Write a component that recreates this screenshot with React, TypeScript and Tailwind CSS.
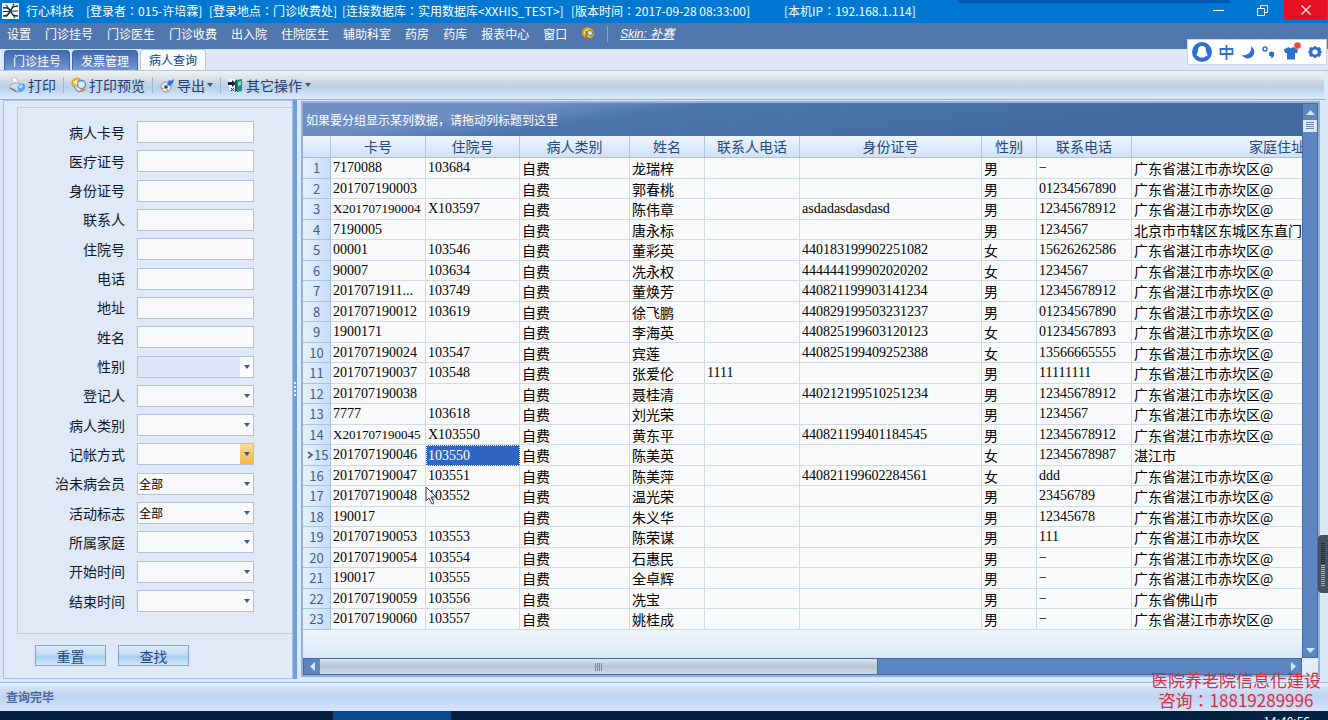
import React from 'react';

type Field = { id: string; label: string; kind: 'text' | 'select'; value?: string; tone?: 'muted' | 'hot' };

const fields: Field[] = [
  { id: 'card', label: '病人卡号', kind: 'text' },
  { id: 'medical', label: '医疗证号', kind: 'text' },
  { id: 'identity', label: '身份证号', kind: 'text' },
  { id: 'contact', label: '联系人', kind: 'text' },
  { id: 'inpatient', label: '住院号', kind: 'text' },
  { id: 'phone', label: '电话', kind: 'text' },
  { id: 'address', label: '地址', kind: 'text' },
  { id: 'name', label: '姓名', kind: 'text' },
  { id: 'sex', label: '性别', kind: 'select', tone: 'muted' },
  { id: 'registrar', label: '登记人', kind: 'select' },
  { id: 'category', label: '病人类别', kind: 'select' },
  { id: 'billing', label: '记帐方式', kind: 'select', tone: 'hot' },
  { id: 'member', label: '治未病会员', kind: 'select', value: '全部' },
  { id: 'active', label: '活动标志', kind: 'select', value: '全部' },
  { id: 'family', label: '所属家庭', kind: 'select' },
  { id: 'start', label: '开始时间', kind: 'select' },
  { id: 'end', label: '结束时间', kind: 'select' },
];

const menus = ['设置', '门诊挂号', '门诊医生', '门诊收费', '出入院', '住院医生', '辅助科室', '药房', '药库', '报表中心', '窗口'];

const GD = '广东省湛江市赤坎区@';

// card, inpatient no., name, contact phone, identity no., sex, phone, address
const patients: string[][] = [
  ['7170088', '103684', '龙瑞梓', '', '', '男', '−', GD],
  ['201707190003', '', '郭春桃', '', '', '男', '01234567890', GD],
  ['X201707190004', 'X103597', '陈伟章', '', 'asdadasdasdasd', '男', '12345678912', GD],
  ['7190005', '', '唐永标', '', '', '男', '1234567', '北京市市辖区东城区东直门街道'],
  ['00001', '103546', '董彩英', '', '440183199902251082', '女', '15626262586', GD],
  ['90007', '103634', '冼永权', '', '444444199902020202', '女', '1234567', GD],
  ['2017071911...', '103749', '董焕芳', '', '440821199903141234', '男', '12345678912', GD],
  ['201707190012', '103619', '徐飞鹏', '', '440829199503231237', '男', '01234567890', GD],
  ['1900171', '', '李海英', '', '440825199603120123', '女', '01234567893', GD],
  ['201707190024', '103547', '宾莲', '', '440825199409252388', '女', '13566665555', GD],
  ['201707190037', '103548', '张爱伦', '1111', '', '男', '11111111', GD],
  ['201707190038', '', '聂桂清', '', '440212199510251234', '男', '12345678912', GD],
  ['7777', '103618', '刘光荣', '', '', '男', '1234567', GD],
  ['X201707190045', 'X103550', '黄东平', '', '440821199401184545', '男', '12345678912', GD],
  ['201707190046', '103550', '陈美英', '', '', '女', '12345678987', '湛江市'],
  ['201707190047', '103551', '陈美萍', '', '440821199602284561', '女', 'ddd', GD],
  ['201707190048', '103552', '温光荣', '', '', '男', '23456789', GD],
  ['190017', '', '朱义华', '', '', '男', '12345678', GD],
  ['201707190053', '103553', '陈荣谋', '', '', '男', '111', '广东省湛江市赤坎区'],
  ['201707190054', '103554', '石惠民', '', '', '男', '−', GD],
  ['190017', '103555', '全卓辉', '', '', '男', '−', GD],
  ['201707190059', '103556', '冼宝', '', '', '男', '−', '广东省佛山市'],
  ['201707190060', '103557', '姚桂成', '', '', '男', '−', GD],
];

const CURRENT_ROW = 14;
const POINTER_ROW = 16;

const headers = ['', '卡号', '住院号', '病人类别', '姓名', '联系人电话', '身份证号', '性别', '联系电话', '家庭住址'];

const Caret = () => (
  <svg width="6" height="4" viewBox="0 0 6 4" className="shrink-0"><path d="M0 0h6L3 4z" fill="#3c5a8c" /></svg>
);

const PrinterIcon = () => (
  <svg width="17" height="16" viewBox="0 0 17 16">
    <path d="M2.500 1l4-.5 3 5.500-5 2z" fill="#fdfdfd" stroke="#aab4c2" strokeWidth=".7" />
    <path d="M1 8l5-2.500 6 1.500 3 3-3 4.500-5 .5-6-4z" fill="#d5dae2" stroke="#8b97a8" strokeWidth=".8" />
    <path d="M1.500 10.500l6 3v1.500l-6-3z" fill="#6b7a90" />
    <path d="M9 9c2-1 4-3 6-2 2 2 1 6-2 7.500-3 1-5-1-4-5.500z" fill="#4da3e6" />
    <path d="M10 9.500c1-1 3-2 4-1 0 2-2 3-4 3z" fill="#b7defa" />
  </svg>
);

const PreviewIcon = () => (
  <svg width="16" height="16" viewBox="0 0 16 16">
    <path d="M1 4l4-3 4 1 1 5-5 4-4-3z" fill="#f1b63a" stroke="#c4841c" strokeWidth=".7" />
    <path d="M2 5l3-2 2 2-1 3z" fill="#fdf2c4" />
    <path d="M3 9l3 5 3 1 2-3" fill="#dde7f2" stroke="#64779a" />
    <circle cx="10.500" cy="7.500" r="4" fill="#d9effd" stroke="#5e91c6" strokeWidth="1.300" />
    <path d="M8 14l5-3 2 2-4 2z" fill="#d8942a" />
  </svg>
);

const ExportIcon = () => (
  <svg width="15" height="15" viewBox="0 0 15 15">
    <circle cx="6" cy="9" r="5" fill="#e9edf2" stroke="#8793a6" strokeWidth="1" />
    <circle cx="6" cy="9" r="1.800" fill="#3a4252" />
    <path d="M2 11l2-1M8 13l-1-2" stroke="#d59b43" strokeWidth="1.200" />
    <path d="M7 7l2-5 2 1 3-2-1 4-3 3z" fill="#2a6ede" />
  </svg>
);

const DoorIcon = () => (
  <svg width="15" height="15" viewBox="0 0 15 15">
    <path d="M1 1h7v10H1z" fill="#f6f9fb" />
    <path d="M0 4h4V2l4 3.500L4 9V7H0z" fill="#14243a" />
    <path d="M7 3l2-2v12l-2 1z" fill="#0f5f5a" />
    <path d="M9 2l5-1v12l-5 1z" fill="#17907f" />
    <path d="M10 4l3-1v4l-3 1z" fill="#7fe0d2" />
    <path d="M3 10l3 3M3 13l3-3" stroke="#333" strokeWidth="1" />
  </svg>
);

const Grip = () => (
  <svg width="8" height="8" viewBox="0 0 8 8"><path d="M.5 0v8M2.500 0v8M4.500 0v8M6.500 0v8" stroke="#6e88b4" /></svg>
);

const Separator = () => <span className="h-4 w-px bg-[#9fb4cf]" />;

const TitleBar = () => (
  <header className="relative flex h-[23px] shrink-0 items-center bg-[#0078d2] pb-px font-['Noto_Sans_CJK_TC',sans-serif] text-xs whitespace-nowrap text-white">
    <div className="absolute top-0 right-[98px] h-[3px] w-[272px] bg-[#0459ae]" />
    <svg width="17" height="16" viewBox="0 0 17 16" className="mr-px ml-[2px] shrink-0">
      <path d="M0 0h17v16H0z" fill="#f4f8fb" />
      <path d="M1 5c4-1 6 0 7 3-1 3-3 5-7 5M16 3c-4 0-7 2-7 5s3 5 7 5" fill="none" stroke="#17304c" strokeWidth="1.400" />
      <path d="M1 8.500h6M10 8h6M4 2l4 5M12 1L9 7M4 14l4-5M13 15l-4-6" fill="none" stroke="#17304c" strokeWidth="1.200" />
    </svg>
    <h1 className="ml-[6px] w-[60px]">行心科技</h1>
    <span className="w-[123px]">[登录者：015-许培霖]</span>
    <span className="w-[133px]">[登录地点：门诊收费处]</span>
    <span className="w-[229px]">[连接数据库：实用数据库&lt;XXHIS_TEST&gt;]</span>
    <span className="w-[213px]">[版本时间：2017-09-28 08:33:00]</span>
    <span>[本机IP：192.168.1.114]</span>
    <div className="ml-auto flex self-start">
      <button aria-label="最小化" className="flex h-5 w-11 items-center justify-center">
        <svg width="11" height="11" viewBox="0 0 11 11"><path d="M0 5.500h11" stroke="#fff" /></svg>
      </button>
      <button aria-label="还原" className="flex h-5 w-11 items-center justify-center">
        <svg width="11" height="11" viewBox="0 0 11 11"><path d="M.5 3.500h7v7h-7zM3.500 3V.5h7v7H8" fill="none" stroke="#fff" /></svg>
      </button>
      <button aria-label="关闭" className="mr-px flex h-5 w-[43px] items-center justify-center bg-[#e81123]">
        <svg width="10" height="10" viewBox="0 0 10 10"><path d="M.5.5l9 9M9.500.5l-9 9" stroke="#fff" strokeWidth="1.100" /></svg>
      </button>
    </div>
  </header>
);

const MenuBar = () => (
  <nav className="flex h-[26px] shrink-0 items-center gap-[14px] bg-[#4f76ad] pb-1 pl-[7px] text-xs whitespace-nowrap text-white">
    {menus.map((item) => <button key={item}>{item}</button>)}
    <div className="flex items-center gap-3">
      <button aria-label="帮助">
        <svg width="14" height="16" viewBox="0 0 14 16">
          <path d="M5 11C1 9 1 4 5 2.500c3-1 7 1 7 4.500 0 2-1 4-3 4.500" fill="#f3dc9a" stroke="#e0a52c" strokeWidth="2" />
          <path d="M5.500 5v9.500" stroke="#a8741a" strokeWidth="2.200" />
          <circle cx="9" cy="7" r="2.600" fill="#d9e4c9" stroke="#4f8a6d" />
        </svg>
      </button>
      <span className="h-4 w-px bg-[#86a3cd]" />
      <a href="#skin" className="font-['Liberation_Sans','Noto_Sans_CJK_SC',sans-serif] italic underline">Skin: 补赛</a>
    </div>
  </nav>
);

const TabStrip = () => (
  <div role="tablist" className="flex h-[22px] shrink-0 items-end gap-[2px] border-b border-[#b9c6de] bg-[#dfe8f8] pl-1 text-xs">
    <button role="tab" className="h-5 w-[66px] rounded-t-sm border border-b-0 border-[#3f66a8] bg-linear-to-b from-[#3f68b2] to-[#7397d3] text-white">门诊挂号</button>
    <button role="tab" className="h-5 w-[66px] rounded-t-sm border border-b-0 border-[#3f66a8] bg-linear-to-b from-[#3f68b2] to-[#7397d3] text-white">发票管理</button>
    <button role="tab" aria-selected="true" className="h-[21px] w-[66px] rounded-t-sm border border-b-0 border-[#b4c8e6] bg-[#f7fbff] text-[#223f78]">病人查询</button>
  </div>
);

const Toolbar = () => (
  <div className="flex h-[29px] shrink-0 items-center gap-[7px] border-r-4 border-b border-r-[#dfe9f8] border-b-[#8fb0d8] bg-[linear-gradient(#f1f3f0_0%,#dfe4e8_25%,#cbd6e2_40%,#b7d0e8_60%,#cfe1f8_85%,#dbe9fb_100%)] pl-[9px] text-sm text-[#1f3c74]">
    <button className="flex items-center gap-[2px]"><PrinterIcon />打印</button>
    <Separator />
    <button className="flex items-center gap-[2px]"><PreviewIcon />打印预览</button>
    <Separator />
    <button className="flex items-center gap-[2px]"><ExportIcon />导出<Caret /></button>
    <Separator />
    <button className="flex items-center gap-[3px]"><DoorIcon />其它操作<Caret /></button>
  </div>
);

const FieldRow: React.FC<{ field: Field }> = ({ field }) => (
  <div className="flex items-center gap-3">
    <label htmlFor={field.id} className="w-[107px] pb-px text-right text-sm leading-5 text-[#101828]">{field.label}</label>
    {field.kind === 'text' ? (
      <input id={field.id} type="text" className="h-[22px] w-[117px] border border-[#b6c1d4] bg-[#f9fafb] px-px text-xs" />
    ) : (
      <div className={`flex h-[22px] w-[117px] border border-[#b6c1d4] ${field.tone === 'muted' ? 'bg-[#dde7f8]' : 'bg-[#f9fafb]'}`}>
        <select id={field.id} className="min-w-0 flex-1 appearance-none bg-transparent px-px text-xs text-black">
          <option>{field.value ?? ''}</option>
        </select>
        <span className={`flex w-[13px] items-center justify-center ${field.tone === 'hot' ? 'bg-linear-to-b from-[#f9dc92] to-[#eeb93e]' : 'bg-[#f9fafb]'}`}>
          <Caret />
        </span>
      </div>
    )}
  </div>
);

const SearchPanel = () => (
  <aside className="flex w-[290px] shrink-0 flex-col border border-[#a9c3e6] bg-[#e0e9f8]">
    <div className="mt-[6px] ml-[13px] flex flex-1 flex-col justify-between border border-r-0 border-[#bccde6] pt-[13px] pb-[21px]">
      {fields.map((field) => <FieldRow key={field.id} field={field} />)}
    </div>
    <div className="flex gap-3 pt-[11px] pb-3 pl-[31px]">
      {['重置', '查找'].map((text) => (
        <button key={text} className="h-[21px] w-[71px] border border-[#7fa3d3] bg-[linear-gradient(#dcecfb_0%,#c3dcf5_45%,#a9cdf0_55%,#cfeafc_100%)] text-sm leading-4 text-[#27467e]">{text}</button>
      ))}
    </div>
  </aside>
);

const cell = 'overflow-hidden border-r border-b border-[#d3dae4] p-0 pl-[2px] align-middle whitespace-nowrap';
const digits = "font-['Liberation_Serif','Noto_Sans_CJK_SC',serif] text-sm/4";
const longDigits = "font-['Liberation_Serif','Noto_Sans_CJK_SC',serif] text-[13px]/4";
const hanzi = "font-['Noto_Sans_CJK_SC',sans-serif] text-sm/4";

const PatientTable = () => (
  <table className="w-[1120px] table-fixed border-separate border-spacing-0 text-black">
    <colgroup>
      <col className="w-[28px]" />
      <col className="w-[95px]" />
      <col className="w-[94px]" />
      <col className="w-[110px]" />
      <col className="w-[75px]" />
      <col className="w-[95px]" />
      <col className="w-[182px]" />
      <col className="w-[55px]" />
      <col className="w-[95px]" />
      <col className="w-[291px]" />
    </colgroup>
    <thead>
      <tr className="h-[22px]">
        {headers.map((text) => (
          <th key={text} className="border-r border-b border-r-[#b3c5de] border-b-[#a9c0de] bg-linear-to-b from-[#eef6fd] to-[#cfe2f8] p-0 pb-[2px] text-sm/4 font-normal text-[#27467e]">{text}</th>
        ))}
      </tr>
    </thead>
    <tbody>
      {patients.map(([card, inpatient, name, contact, identity, sex, phone, address], i) => (
        <tr key={i} className="bg-[#f9fafb] odd:h-[21px] even:h-5">
          <th className="overflow-hidden border-r border-b border-[#a9c3e4] bg-linear-to-r from-[#e6f2fd] to-[#c8def7] p-0 text-[13px]/4 font-normal text-[#3f5c90]">
            {i === CURRENT_ROW ? (
              <span className="flex items-center pl-1">
                <svg width="7" height="8" viewBox="0 0 7 8"><path d="M1 1l4 3-4 3" fill="none" stroke="#4a648f" strokeWidth="1.800" /></svg>
                <span>15</span>
              </span>
            ) : i + 1}
          </th>
          <td className={`${cell} ${card.startsWith('X') ? longDigits : digits}`}>{card}</td>
          {i === CURRENT_ROW ? (
            <td className={`border border-dotted border-white bg-[#2f66c4] p-0 pl-px align-middle text-white ${digits}`}>{inpatient}</td>
          ) : i === POINTER_ROW ? (
            <td className={`relative border-r border-b border-[#d3dae4] p-0 pl-[2px] align-middle ${digits}`}>
              {inpatient}
              <svg width="12" height="19" viewBox="0 0 12 19" className="absolute top-0 -left-px">
                <path d="M1 1v14l3-3 3 6 2-1-3-6h5z" fill="#fff" stroke="#444" />
              </svg>
            </td>
          ) : (
            <td className={`${cell} ${digits}`}>{inpatient}</td>
          )}
          <td className={`${cell} ${hanzi}`}>自费</td>
          <td className={`${cell} ${hanzi}`}>{name}</td>
          <td className={`${cell} ${digits}`}>{contact}</td>
          <td className={`${cell} ${digits}`}>{identity}</td>
          <td className={`${cell} ${hanzi}`}>{sex}</td>
          <td className={`${cell} ${digits}`}>{phone}</td>
          <td className={`${cell} ${hanzi}`}>{address}</td>
        </tr>
      ))}
    </tbody>
  </table>
);

const PatientGrid = () => (
  <section className="mt-px mr-2 mb-[2px] ml-1 flex min-w-0 flex-1 border-2 border-[#8fb2de] bg-[#e3ecf9]">
    <div className="flex min-w-0 flex-1 flex-col">
      <div className="flex h-[33px] shrink-0 items-center bg-[linear-gradient(172deg,#7391c6_0%,#6b8bc1_22%,#4b73ac_34%,#41699f_100%)] pl-[3px] text-xs text-white">如果要分组显示某列数据，请拖动列标题到这里</div>
      <div className="flex-1 overflow-hidden bg-[linear-gradient(#f1f7fd_0%,#f1f7fd_94%,#d9e7f7_100%)]">
        <PatientTable />
      </div>
      <div className="flex h-[17px] shrink-0 border border-[#446a9f] bg-[#5c86bf]">
        <button aria-label="向左滚动" className="flex w-4 items-center justify-center">
          <svg width="5" height="9" viewBox="0 0 5 9"><path d="M5 0v9L0 4.500z" fill="#cfe9ff" /></svg>
        </button>
        <div className="flex w-[56%] items-center justify-center border-r border-[#446a9f] bg-linear-to-b from-[#dde4ec] via-[#b5c4d4] to-[#cfdae6]"><Grip /></div>
        <button aria-label="向右滚动" className="ml-auto flex w-4 items-center justify-center">
          <svg width="5" height="9" viewBox="0 0 5 9"><path d="M0 0v9l5-4.500z" fill="#cfe9ff" /></svg>
        </button>
      </div>
    </div>
    <div className="mb-[17px] flex w-4 shrink-0 flex-col border border-[#446a9f] bg-[#5c86bf]">
      <button aria-label="向上滚动" className="flex h-4 items-center justify-center">
        <svg width="9" height="5" viewBox="0 0 9 5"><path d="M0 5h9L4.500 0z" fill="#cfe9ff" /></svg>
      </button>
      <div className="flex h-3 items-center justify-center bg-[#dfe8f4]"><span className="rotate-90"><Grip /></span></div>
      <button aria-label="向下滚动" className="mt-auto flex h-[14px] items-center justify-center">
        <svg width="9" height="5" viewBox="0 0 9 5"><path d="M0 0h9L4.500 5z" fill="#cfe9ff" /></svg>
      </button>
    </div>
  </section>
);

const InputMethodBar = () => (
  <div className="absolute top-[39px] right-px flex h-[26px] w-[140px] items-center justify-between border border-[#cdd6e8] bg-white px-1 text-[#2f6fd0]">
    <svg width="20" height="20" viewBox="0 0 20 20">
      <circle cx="10" cy="10" r="10" fill="#2f6fd0" />
      <path d="M10 4c3 0 4 2 4 4.500 0 2 1.500 3 1.500 5.500-.5.500-1 0-1.500-.5-.5 1-1 1.500-1.500 2h-5C7 15 6.500 14.500 6 13.500c-.5.5-1 1-1.500.5 0-2.500 1.500-3.500 1.500-5.500C6 6 7 4 10 4z" fill="#fff" />
    </svg>
    <svg width="15" height="15" viewBox="0 0 15 15"><path d="M1.500 4h12v5h-12zM7.500 0v15" fill="none" stroke="currentColor" strokeWidth="1.800" /></svg>
    <svg width="13" height="13" viewBox="0 0 13 13"><path d="M9 0c5 4 4 10-1 12-3 1-6 0-8-3 6 1 10-3 9-9z" fill="currentColor" /></svg>
    <svg width="13" height="14" viewBox="0 0 13 14">
      <circle cx="3" cy="4" r="2" fill="none" stroke="currentColor" strokeWidth="1.500" />
      <path d="M9.500 6.500a2.600 2.600 0 0 1 2.800 2.800c0 2.400-1.800 4-4.300 4.700 1.200-1 1.600-1.600 1.500-2.300a2.600 2.600 0 0 1 0-5.200z" fill="currentColor" />
    </svg>
    <svg width="18" height="20" viewBox="0 0 18 20">
      <path d="M1 7.500L5.500 5c1 1.500 3.500 1.500 4.500 0l5 2.500-1 3.500h-2v6.500H4V11H2z" fill="currentColor" />
      <circle cx="14.500" cy="3.500" r="3.300" fill="#ea4b35" />
    </svg>
    <svg width="14" height="14" viewBox="0 0 14 14">
      <path d="M7 1l2 2 3-.2.3 2.700L13.500 7l-1.200 1.500L12 11.200 9 11l-2 2-2-2-3 .2-.3-2.700L.5 7l1.200-1.500L2 2.800 5 3z" fill="currentColor" stroke="currentColor" strokeLinejoin="round" />
      <circle cx="7" cy="7" r="2.600" fill="#fff" />
    </svg>
  </div>
);

const VolumeMeter = () => (
  <div className="absolute top-[535px] right-0 flex h-[58px] w-[10px] flex-col items-center gap-px rounded-l-[4px] bg-[#46505f] pt-2">
    {Array.from({ length: 22 }, (_, i) => (
      <span key={i} className={`h-px w-1 ${i < 11 ? 'bg-[#222a35]' : i < 16 ? 'bg-[#a9d45f]' : 'bg-[#5ed8a0]'}`} />
    ))}
  </div>
);

export default function App() {
  return (
    <div className="relative flex min-h-screen flex-col overflow-hidden bg-[#d6e5f9] font-['Noto_Sans_CJK_SC',sans-serif]">
      <TitleBar />
      <MenuBar />
      <TabStrip />
      <Toolbar />
      <main className="flex flex-1 bg-[#dce8f9] pb-[3px] pl-[3px]">
        <SearchPanel />
        <div className="flex w-1 shrink-0 items-center justify-center bg-[#6f9fd8]">
          <svg width="2" height="15" viewBox="0 0 2 15"><path d="M1 0v15" stroke="#e8f3ff" strokeWidth="2" strokeDasharray="2 2" /></svg>
        </div>
        <PatientGrid />
      </main>
      <footer className="flex h-[29px] shrink-0 items-center border-t border-[#9db9df] bg-[linear-gradient(#e9f2fd_0%,#cfe0f6_20%,#bdd4f0_50%,#d3e5fa_100%)] pl-[6px] text-xs font-bold text-[#4a689c]">查询完毕</footer>
      <div className="flex h-[9px] shrink-0 overflow-hidden bg-[#03203f] pl-[333px]">
        <span className="w-[118px] bg-[#07498a]" />
        <span className="mt-1 mr-[18px] ml-auto text-xs leading-3 text-white">14:40:56</span>
      </div>
      <InputMethodBar />
      <VolumeMeter />
      <div className="absolute right-[7px] bottom-[10px] text-center font-['Noto_Sans_CJK_TC',sans-serif] text-[17px] leading-5 text-[#e02b3c]">
        <p>医院养老院信息化建设</p>
        <p>咨询：18819289996</p>
      </div>
    </div>
  );
}
